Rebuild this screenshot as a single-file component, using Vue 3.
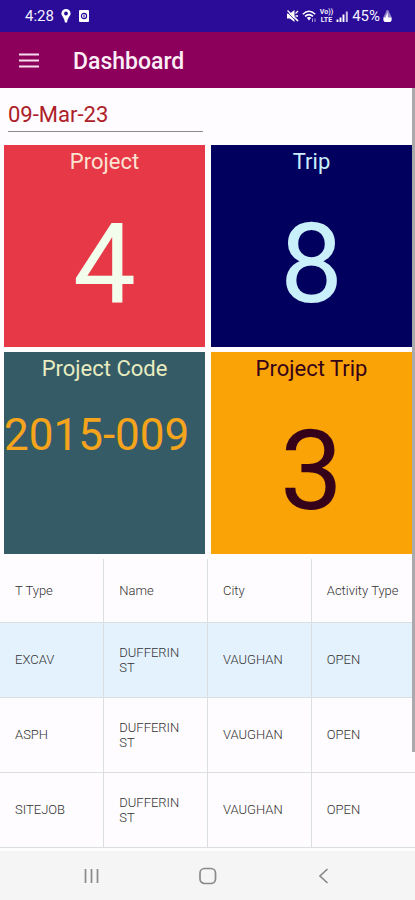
<script setup>
import { ref } from 'vue'

const date = ref('09-Mar-23')

const tiles = [
  { title: 'Project', value: '4', kind: 'project' },
  { title: 'Trip', value: '8', kind: 'trip' },
  { title: 'Project Code', value: '2015-009', kind: 'code' },
  { title: 'Project Trip', value: '3', kind: 'project-trip' },
]

const columns = ['T Type', 'Name', 'City', 'Activity Type']

const rows = [
  { type: 'EXCAV', name: 'DUFFERIN ST', city: 'VAUGHAN', activity: 'OPEN' },
  { type: 'ASPH', name: 'DUFFERIN ST', city: 'VAUGHAN', activity: 'OPEN' },
  { type: 'SITEJOB', name: 'DUFFERIN ST', city: 'VAUGHAN', activity: 'OPEN' },
]
const selected = ref(0)
</script>

<template>
  <div class="screen">
    <div class="status">
      <div class="status-group">
        <span class="clock">4:28</span>
        <svg width="10" height="14" viewBox="0 0 10 14">
          <path fill="#fff" fill-rule="evenodd" d="M5 0a4.6 4.6 0 0 0-4.6 4.6C.4 7.200 3.300 8.200 3.900 13.500h2.200C6.700 8.200 9.600 7.200 9.600 4.600A4.600 4.600 0 0 0 5 0zm0 2.600a1.900 1.900 0 1 1 0 3.800 1.900 1.900 0 0 1 0-3.800z" />
        </svg>
        <svg width="12" height="14" viewBox="0 0 12 14">
          <rect x="1" y="1" width="10" height="12" rx="1" fill="#fff" />
          <circle cx="6" cy="7" r="2.600" fill="none" stroke="#2a0c98" stroke-width="1.200" />
          <path d="M6 5.500v3" stroke="#2a0c98" />
        </svg>
      </div>
      <div class="status-group right">
        <svg width="13" height="14" viewBox="0 0 13 14">
          <path d="M1 4.500h3l4.500-3.500v12L4 9.500H1z" fill="#fff" />
          <path d="M9.500 4.500l2.500-2.500M9.500 7h2.500M9.500 9.500l2.500 2.500" stroke="#fff" stroke-width="1.300" />
          <path d="M1.500 1.500l10.500 10.500" stroke="#fff" stroke-width="1.200" />
          <path d="M.5 2.500l10.500 10.500" stroke="#2a0c98" stroke-width=".8" />
        </svg>
        <svg width="15" height="14" viewBox="0 0 15 14">
          <path d="M.8 5.200q6.200-5.800 12.400 0M3 7.400q4-3.600 8 0" fill="none" stroke="#fff" stroke-width="1.500" />
          <path d="M4.800 8.800q2.200-1.700 4.400 0L7 11.500z" fill="#fff" />
          <path d="M10.500 9.500v3.500M13 9.500v3.500" stroke="#fff" stroke-width="1" opacity=".6" />
        </svg>
        <span class="volte"><span>Vo))</span><span>LTE</span></span>
        <svg width="13" height="14" viewBox="0 0 13 14">
          <path d="M1.500 10.500V13M4.500 8.500V13M7.500 5.500V13" stroke="#fff" stroke-width="1.900" />
          <path d="M10.800 2.500V13" stroke="#fff" stroke-width="2" opacity=".75" />
        </svg>
        <span class="battery">45%</span>
        <svg width="9" height="14" viewBox="0 0 9 14">
          <path d="M3 3q0-2 1.500-2T6 3l2.500 5v3q0 2-2 2h-4q-2 0-2-2V8z" fill="#fff" opacity=".5" />
          <path d="M.5 8.500h2l2-5 .5 5h3.500V11q0 2-2 2h-4q-2 0-2-2z" fill="#fff" />
        </svg>
      </div>
    </div>

    <header class="bar">
      <button class="menu" type="button" aria-label="Menu">
        <svg width="20" height="15" viewBox="0 0 20 15">
          <path d="M0 1.500h20M0 7.500h20M0 13.500h20" stroke="#f6dcec" stroke-width="2.200" />
        </svg>
      </button>
      <h1>Dashboard</h1>
    </header>

    <main class="content">
      <input v-model="date" class="date" type="text" aria-label="Date" />

      <section class="tiles">
        <article v-for="tile in tiles" :key="tile.kind" class="tile" :class="tile.kind">
          <h2>{{ tile.title }}</h2>
          <p>{{ tile.value }}</p>
        </article>
      </section>

      <table class="grid">
        <thead>
          <tr>
            <th v-for="column in columns" :key="column" scope="col">{{ column }}</th>
          </tr>
        </thead>
        <tbody>
          <tr v-for="(row, i) in rows" :key="row.type" :class="{ selected: i === selected }" @click="selected = i">
            <td>{{ row.type }}</td>
            <td>{{ row.name }}</td>
            <td>{{ row.city }}</td>
            <td>{{ row.activity }}</td>
          </tr>
        </tbody>
      </table>
      <div class="scrollbar"></div>
    </main>

    <nav class="nav">
      <button type="button" aria-label="Recent apps">
        <svg width="18" height="18" viewBox="0 0 18 18">
          <path d="M3.500 2v14M9.500 2v14M15.500 2v14" stroke="#8a8a8a" stroke-width="1.700" />
        </svg>
      </button>
      <button type="button" aria-label="Home">
        <svg width="18" height="18" viewBox="0 0 18 18">
          <rect x="1" y="1.500" width="15.500" height="15" rx="4.500" fill="none" stroke="#8a8a8a" stroke-width="1.700" />
        </svg>
      </button>
      <button type="button" aria-label="Back">
        <svg width="18" height="18" viewBox="0 0 18 18">
          <path d="M12.500 2L5 9l7.500 7" fill="none" stroke="#8a8a8a" stroke-width="1.700" />
        </svg>
      </button>
    </nav>
  </div>
</template>

<style>
body {
  margin: 0;
  background: #fefcfe;
}
</style>

<style scoped>
.screen {
  display: flex;
  flex-direction: column;
  min-height: 100vh;
  font-family: Roboto, "Liberation Sans", sans-serif;
  background: #fefcfe;
}

button {
  display: flex;
  align-items: center;
  justify-content: center;
  padding: 0;
  border: 0;
  background: none;
}

.status {
  display: flex;
  align-items: center;
  justify-content: space-between;
  height: 32px;
  padding: 0 23px 0 25px;
  background: #2a0c98;
  color: #f4f0ff;
}

.status-group {
  display: flex;
  align-items: center;
  gap: 7px;
}

.status-group.right {
  gap: 3px;
}

.clock,
.battery {
  font-size: 15px;
  font-weight: 400;
  line-height: 16px;
}

.volte {
  display: flex;
  flex-direction: column;
  align-items: center;
  font-size: 7px;
  font-weight: 700;
  line-height: 8px;
}

.bar {
  display: flex;
  align-items: center;
  gap: 32px;
  height: 56px;
  padding: 0 16px;
  background: #8c005c;
}

.menu {
  width: 25px;
  height: 40px;
}

.bar h1 {
  margin: 0;
  padding-top: 3px;
  font-size: 23px;
  font-weight: 500;
  line-height: 28px;
  color: #fbeef6;
}

.content {
  position: relative;
  flex: 1;
}

.date {
  display: block;
  box-sizing: border-box;
  width: 47%;
  height: 32px;
  margin: 12px 0 0 8px;
  padding: 0 0 2px;
  border: 0;
  border-bottom: 1px solid #8d898d;
  border-radius: 0;
  outline: 0;
  background: none;
  font-family: inherit;
  font-size: 22px;
  color: #ae2029;
}

.tiles {
  display: grid;
  grid-template-columns: 1fr 1fr;
  gap: 5px 6px;
  padding: 13px 3px 0 4px;
}

.tile {
  height: 202px;
  text-align: center;
}

.tile h2 {
  margin: 0;
  padding-top: 4px;
  font-size: 22px;
  font-weight: 400;
  line-height: 26px;
}

.tile p {
  margin: 0;
  padding-top: 23px;
  font-size: 112px;
  line-height: 132px;
}

.project {
  background: #e63846;
  color: #f2fdec;
}

.project h2 {
  color: #fbe3d3;
}

.trip {
  background: #02005e;
  color: #c9effb;
}

.code {
  background: #355c66;
  color: #f6a41c;
}

.code h2 {
  color: #e9ecc0;
}

.code p {
  font-size: 44px;
  line-height: 60px;
  text-align: left;
}

.project-trip {
  background: #faa307;
  color: #350219;
}

.grid {
  width: 100%;
  margin-top: 5px;
  border-collapse: collapse;
  table-layout: fixed;
  font-size: 13px;
  line-height: 15px;
  color: #333;
}

.grid th,
.grid td {
  box-sizing: border-box;
  padding: 0 15px;
  border-right: 1px solid #dcdfe2;
  border-bottom: 1px solid #dcdfe2;
  font-weight: 300;
  text-align: left;
  vertical-align: middle;
}

.grid th {
  height: 63px;
  padding-right: 0;
}

.grid td {
  height: 75px;
}

.grid th:last-child,
.grid td:last-child {
  border-right: 0;
}

.grid .selected {
  background: #e4f2fe;
}

.scrollbar {
  position: absolute;
  top: 0;
  right: 0;
  width: 3px;
  height: 87%;
  background: #aaa9ab;
}

.nav {
  display: flex;
  align-items: center;
  justify-content: center;
  height: 49px;
  background: #f5f5f5;
}

.nav button {
  width: 28%;
  height: 48px;
}
</style>
